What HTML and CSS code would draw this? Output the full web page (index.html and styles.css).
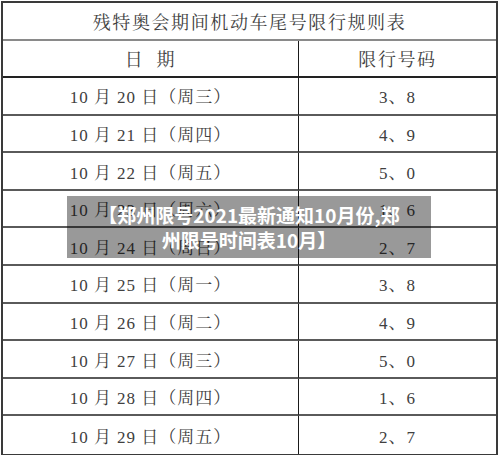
FILE: index.html
```html
<!DOCTYPE html>
<html lang="zh-CN">
<head>
<meta charset="utf-8">
<title>郑州限号2021最新通知10月份</title>
<link rel="stylesheet" href="styles.css">
</head>
<body>
<div class="page">
  <div class="sheet">
    <div class="cell title">残特奥会期间机动车尾号限行规则表</div>
    <div class="cell head left">日 期</div>
    <div class="cell head">限行号码</div>
    <div class="cell left">10 月 20 日（周三）</div><div class="cell">3、8</div>
    <div class="cell left">10 月 21 日（周四）</div><div class="cell">4、9</div>
    <div class="cell left">10 月 22 日（周五）</div><div class="cell">5、0</div>
    <div class="cell left">10 月 23 日（周六）</div><div class="cell">1、6</div>
    <div class="cell left">10 月 24 日（周日）</div><div class="cell">2、7</div>
    <div class="cell left">10 月 25 日（周一）</div><div class="cell">3、8</div>
    <div class="cell left">10 月 26 日（周二）</div><div class="cell">4、9</div>
    <div class="cell left">10 月 27 日（周三）</div><div class="cell">5、0</div>
    <div class="cell left">10 月 28 日（周四）</div><div class="cell">1、6</div>
    <div class="cell left last">10 月 29 日（周五）</div><div class="cell last">2、7</div>
  </div>
  <div class="caption">【郑州限号2021最新通知10月份,郑<br>州限号时间表10月】</div>
</div>
</body>
</html>
```
FILE: styles.css
```css
html, body {
  margin: 0;
  padding: 0;
  background: #ffffff;
}
.page {
  position: relative;
  width: 500px;
  height: 456px;
  overflow: hidden;
}
.sheet {
  margin: 1px 0 0 1px;
  width: 497px;
  height: 454px;
  box-sizing: border-box;
  border: 2px solid #3a3a3a;
  border-bottom-width: 1px;
  display: grid;
  grid-template-columns: 296px 1fr;
  grid-template-rows: repeat(12, 1fr);
  font-family: "Liberation Serif", "Noto Serif CJK SC", "Noto Sans CJK SC", serif;
  color: #404040;
  font-size: 17px;
  letter-spacing: 1px;
}
.cell {
  display: flex;
  align-items: center;
  justify-content: center;
  border-bottom: 2px solid #5a5a5a;
}
.cell.last {
  border-bottom: 0;
}
.left {
  border-right: 1px solid #1a1a1a;
}
.title {
  grid-column: 1 / span 2;
  font-size: 18px;
  letter-spacing: 1.6px;
  border-bottom-color: #8a8a8a;
}
.head {
  font-size: 18px;
  letter-spacing: 1.6px;
  word-spacing: 6px;
  border-bottom-color: #222;
}
.caption {
  position: absolute;
  left: 67px;
  top: 196px;
  width: 364px;
  height: 62px;
  box-sizing: border-box;
  padding-top: 6px;
  background: rgba(0, 0, 0, 0.4);
  color: #ffffff;
  font-family: "Noto Sans CJK SC", "Noto Sans", sans-serif;
  font-weight: 700;
  font-size: 19px;
  line-height: 25px;
  text-align: center;
  white-space: nowrap;
}
```
